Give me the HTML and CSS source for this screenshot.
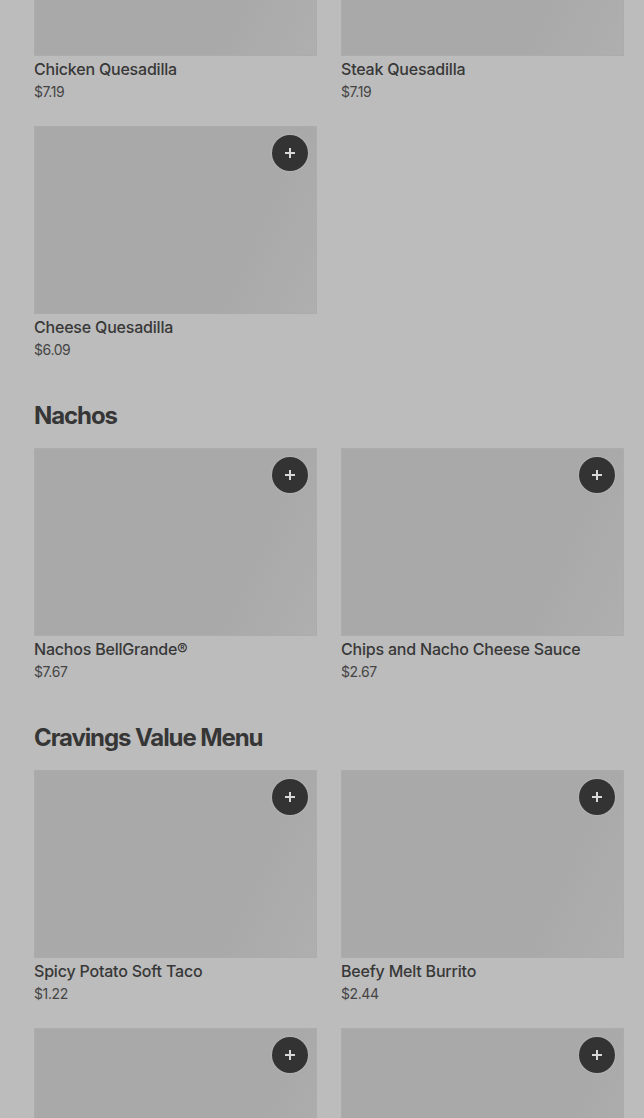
FILE: index.html
```html
<!DOCTYPE html>
<html lang="en">
<head>
<meta charset="utf-8">
<title>Menu</title>
<link rel="stylesheet" href="styles.css">
</head>
<body>
<main class="menu">
  <section class="section">
    <div class="grid">
      <div class="card"><div class="thumb"><button class="add"><svg viewBox="0 0 12 12" width="12" height="12"><path d="M6 1v10M1 6h10" stroke="currentColor" stroke-width="2"/></svg></button></div><div class="name">Chicken Quesadilla</div><div class="price">$7.19</div></div>
      <div class="card"><div class="thumb"><button class="add"><svg viewBox="0 0 12 12" width="12" height="12"><path d="M6 1v10M1 6h10" stroke="currentColor" stroke-width="2"/></svg></button></div><div class="name">Steak Quesadilla</div><div class="price">$7.19</div></div>
      <div class="card"><div class="thumb"><button class="add"><svg viewBox="0 0 12 12" width="12" height="12"><path d="M6 1v10M1 6h10" stroke="currentColor" stroke-width="2"/></svg></button></div><div class="name">Cheese Quesadilla</div><div class="price">$6.09</div></div>
    </div>
  </section>
  <section class="section">
    <h2 class="heading">Nachos</h2>
    <div class="grid">
      <div class="card"><div class="thumb"><button class="add"><svg viewBox="0 0 12 12" width="12" height="12"><path d="M6 1v10M1 6h10" stroke="currentColor" stroke-width="2"/></svg></button></div><div class="name">Nachos BellGrande®</div><div class="price">$7.67</div></div>
      <div class="card"><div class="thumb"><button class="add"><svg viewBox="0 0 12 12" width="12" height="12"><path d="M6 1v10M1 6h10" stroke="currentColor" stroke-width="2"/></svg></button></div><div class="name">Chips and Nacho Cheese Sauce</div><div class="price">$2.67</div></div>
    </div>
  </section>
  <section class="section">
    <h2 class="heading">Cravings Value Menu</h2>
    <div class="grid">
      <div class="card"><div class="thumb"><button class="add"><svg viewBox="0 0 12 12" width="12" height="12"><path d="M6 1v10M1 6h10" stroke="currentColor" stroke-width="2"/></svg></button></div><div class="name">Spicy Potato Soft Taco</div><div class="price">$1.22</div></div>
      <div class="card"><div class="thumb"><button class="add"><svg viewBox="0 0 12 12" width="12" height="12"><path d="M6 1v10M1 6h10" stroke="currentColor" stroke-width="2"/></svg></button></div><div class="name">Beefy Melt Burrito</div><div class="price">$2.44</div></div>
      <div class="card"><div class="thumb"><button class="add"><svg viewBox="0 0 12 12" width="12" height="12"><path d="M6 1v10M1 6h10" stroke="currentColor" stroke-width="2"/></svg></button></div><div class="name">&nbsp;</div><div class="price">&nbsp;</div></div>
      <div class="card"><div class="thumb"><button class="add"><svg viewBox="0 0 12 12" width="12" height="12"><path d="M6 1v10M1 6h10" stroke="currentColor" stroke-width="2"/></svg></button></div><div class="name">&nbsp;</div><div class="price">&nbsp;</div></div>
    </div>
  </section>
</main>
</body>
</html>
```
FILE: styles.css
```css
html, body {
  margin: 0;
  padding: 0;
  background: #bcbcbc;
  overflow: hidden;
  height: 1118px;
}
body {
  font-family: Inter, "Liberation Sans", sans-serif;
  color: #383838;
}
.menu {
  margin-top: -132px;
  padding: 0 20px 0 34px;
  display: flex;
  flex-direction: column;
  gap: 40px;
}
.heading {
  margin: 0 0 16px;
  font-size: 24px;
  line-height: 32px;
  font-weight: 700;
  letter-spacing: -1.1px;
  color: #363636;
}
.grid {
  display: grid;
  grid-template-columns: 283px 283px;
  column-gap: 24px;
  row-gap: 24px;
}
.card {
  display: flex;
  flex-direction: column;
}
.thumb {
  position: relative;
  height: 188px;
  background: linear-gradient(115deg, #a9a9a9 0%, #a9a9a9 72%, #afafaf 100%);
  box-shadow: inset 0 0 0 1px #acacac;
}
.add {
  position: absolute;
  top: 9px;
  right: 9px;
  width: 36px;
  height: 36px;
  border-radius: 50%;
  border: none;
  padding: 0;
  background: #333333;
  color: #d8d8d8;
  display: flex;
  align-items: center;
  justify-content: center;
  box-shadow: 0 0 2px rgba(255,255,255,0.35);
}
.name {
  margin-top: 1px;
  font-size: 16px;
  line-height: 24px;
  font-weight: 500;
  letter-spacing: -0.2px;
  color: #383838;
}
.price {
  margin-top: 1px;
  font-size: 14px;
  line-height: 20px;
  letter-spacing: -0.4px;
  color: #454545;
}
```
